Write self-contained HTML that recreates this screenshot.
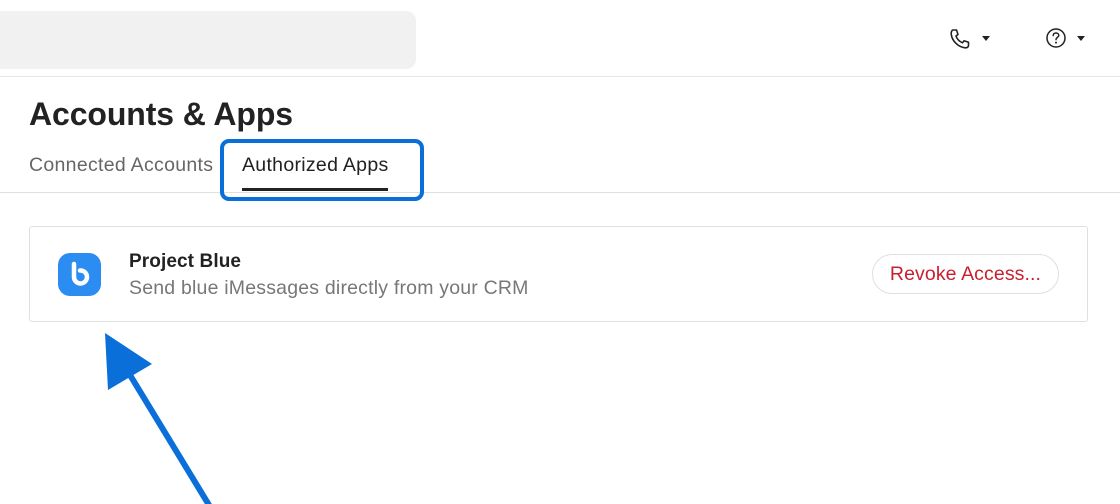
<!DOCTYPE html>
<html><head><meta charset="utf-8"><style>
body{margin:0;width:1120px;height:504px;overflow:hidden;background:#fff;font-family:"Liberation Sans",sans-serif;position:relative}
.abs{position:absolute}
</style></head><body>
<div class="abs" style="left:-10px;top:11px;width:426px;height:58px;background:#f1f1f1;border-radius:10px"></div>
<svg class="abs" style="left:948px;top:27px" width="24" height="24" viewBox="0 0 24 24"><path d="M5 3 L8.5 3 L10 7.5 L8 9 C9 12 11.5 14.5 14.5 15.8 L16 13.8 L20.5 15.3 L20.5 18.5 C20.5 20 19 21 17 20.8 C10 20 4 14 3.2 7 C3 5 4 3 5 3Z" fill="none" stroke="#222" stroke-width="1.6" stroke-linejoin="round"/></svg>
<div class="abs" style="left:982px;top:36px;width:0;height:0;border-left:4.5px solid transparent;border-right:4.5px solid transparent;border-top:5px solid #222"></div>
<svg class="abs" style="left:1045px;top:27px" width="22" height="22" viewBox="0 0 22 22"><circle cx="11" cy="11" r="9" fill="none" stroke="#222" stroke-width="1.5"/><path d="M8.2 8.5 C8.2 6.8 9.5 6 11 6 C12.6 6 13.8 7 13.8 8.4 C13.8 10.2 11 10.4 11 12.6" fill="none" stroke="#222" stroke-width="1.5" stroke-linecap="round"/><circle cx="11" cy="15.6" r="1" fill="#222"/></svg>
<div class="abs" style="left:1077px;top:36px;width:0;height:0;border-left:4.5px solid transparent;border-right:4.5px solid transparent;border-top:5px solid #222"></div>
<div class="abs" style="left:0;top:76px;width:1120px;height:1px;background:#e6e6e6"></div>
<div class="abs" style="left:29px;top:96px;font-size:32px;font-weight:bold;color:#222;letter-spacing:-0.1px">Accounts &amp; Apps</div>
<div class="abs" style="left:29px;top:154px;font-size:19.5px;color:#666;letter-spacing:0.3px">Connected Accounts</div>
<div class="abs" style="left:242px;top:154px;font-size:19.5px;color:#222;letter-spacing:0.3px">Authorized Apps</div>
<div class="abs" style="left:242px;top:188px;width:146px;height:3px;background:#222"></div>
<div class="abs" style="left:0;top:192px;width:1120px;height:1px;background:#e0e0e0"></div>
<div class="abs" style="left:220px;top:139px;width:196px;height:54px;border:4px solid #0a6fd8;border-radius:9px"></div>
<div class="abs" style="left:29px;top:226px;width:1057px;height:94px;border:1px solid #e0e0e0;border-radius:3px"></div>
<div class="abs" style="left:58px;top:253px;width:43px;height:43px;background:#2b8cf2;border-radius:12px"></div>
<svg class="abs" style="left:58px;top:253px" width="43" height="43" viewBox="0 0 43 43"><path d="M16 11 L16 24 A6.5 6.5 0 1 0 22 17.5" fill="none" stroke="#fff" stroke-width="4.5" stroke-linecap="round"/></svg>
<div class="abs" style="left:129px;top:251px;font-size:19px;font-weight:bold;color:#222;letter-spacing:0.1px">Project Blue</div>
<div class="abs" style="left:129px;top:277px;font-size:19.5px;color:#777;letter-spacing:0.2px">Send blue iMessages directly from your CRM</div>
<div class="abs" style="left:872px;top:254px;width:187px;height:40px;border:1px solid #e0e0e0;border-radius:20px;box-sizing:border-box;text-align:center;line-height:38px;font-size:19.5px;color:#c8202f;letter-spacing:0.1px">Revoke Access...</div>
<svg class="abs" style="left:0;top:0" width="1120" height="504"><line x1="212" y1="510" x2="130" y2="375" stroke="#0a6fd8" stroke-width="6"/><polygon points="105,333 152,364 108,390" fill="#0a6fd8"/></svg>
</body></html>
